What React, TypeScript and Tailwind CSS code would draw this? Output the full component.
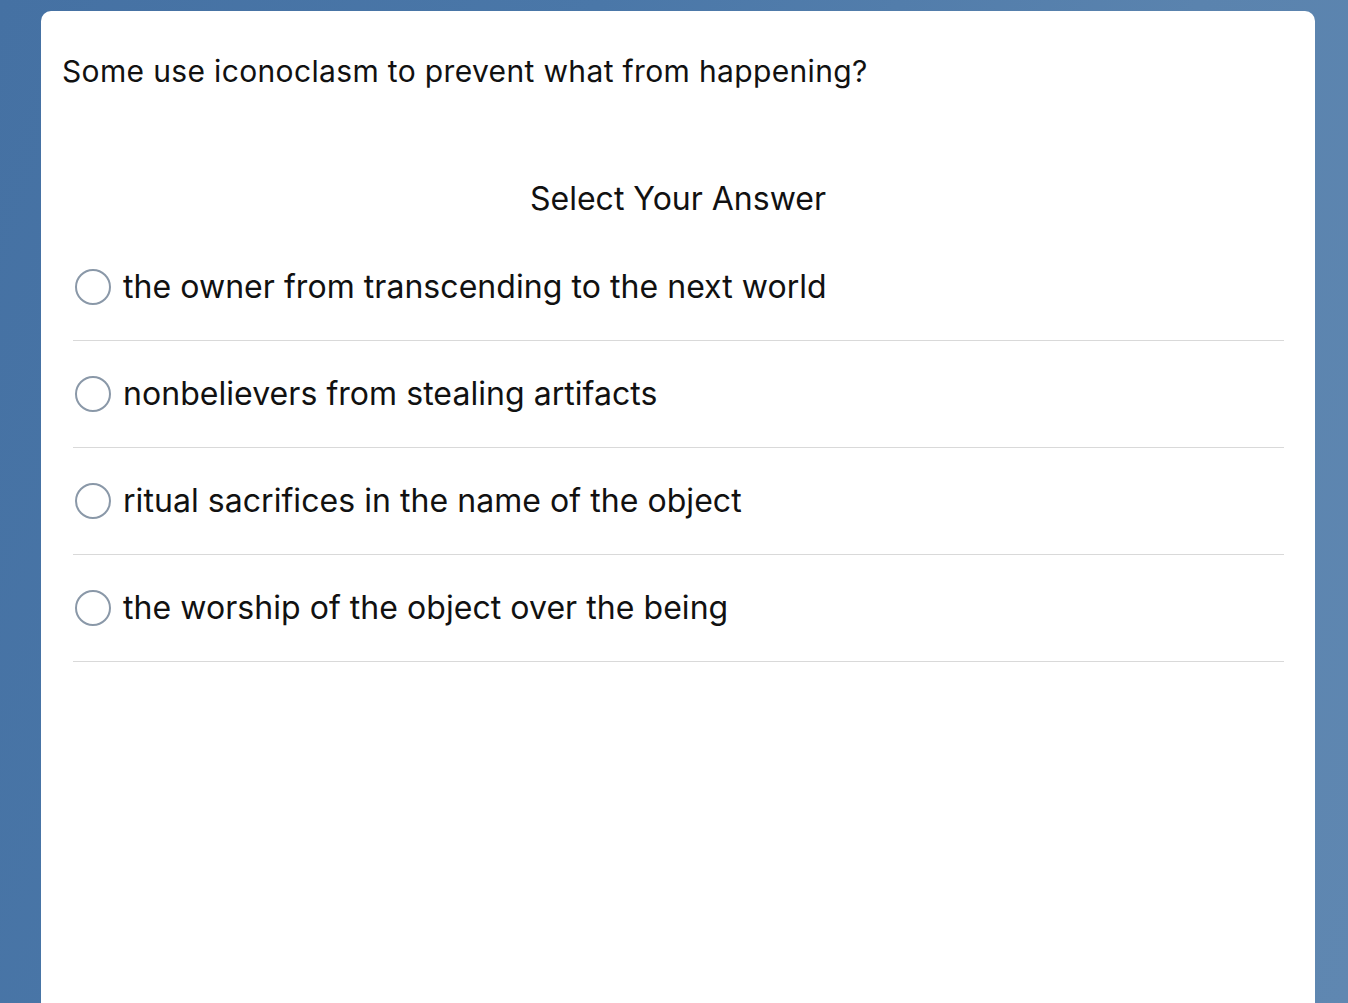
const options = [
  "the owner from transcending to the next world",
  "nonbelievers from stealing artifacts",
  "ritual sacrifices in the name of the object",
  "the worship of the object over the being",
]

export default function App() {
  return (
    <div className="h-[1003px] w-[1348px] overflow-hidden bg-[linear-gradient(110deg,#4571a3_0%,#4a77a8_35%,#5a83ae_70%,#5f87b1_100%)] pt-[11px] font-['Inter','Liberation_Sans',sans-serif]">
      <div className="ml-[41px] mr-[33px] h-[1010px] rounded-[10px] bg-white">
        <div className="px-[21px] pt-[42px]">
          <p className="text-[30px] leading-[36px] tracking-[0.35px] text-[#111]">Some use iconoclasm to prevent what from happening?</p>
        </div>
        <h2 className="mt-[91px] text-center text-[32px] leading-[38px] text-[#111]">Select Your Answer</h2>
        <div className="mx-[32px] mt-[16px] mr-[31px]">
          {options.map((opt, i) => (
            <label key={i} className="flex h-[107px] items-center border-b border-[#d9d9d9] pl-[2px]">
              <span className="h-[36px] w-[36px] shrink-0 rounded-full border-2 border-[#8a98a8]" />
              <span className="ml-[12px] text-[32px] leading-[38px] tracking-[0.05px] text-[#111]">{opt}</span>
            </label>
          ))}
        </div>
      </div>
    </div>
  )
}
